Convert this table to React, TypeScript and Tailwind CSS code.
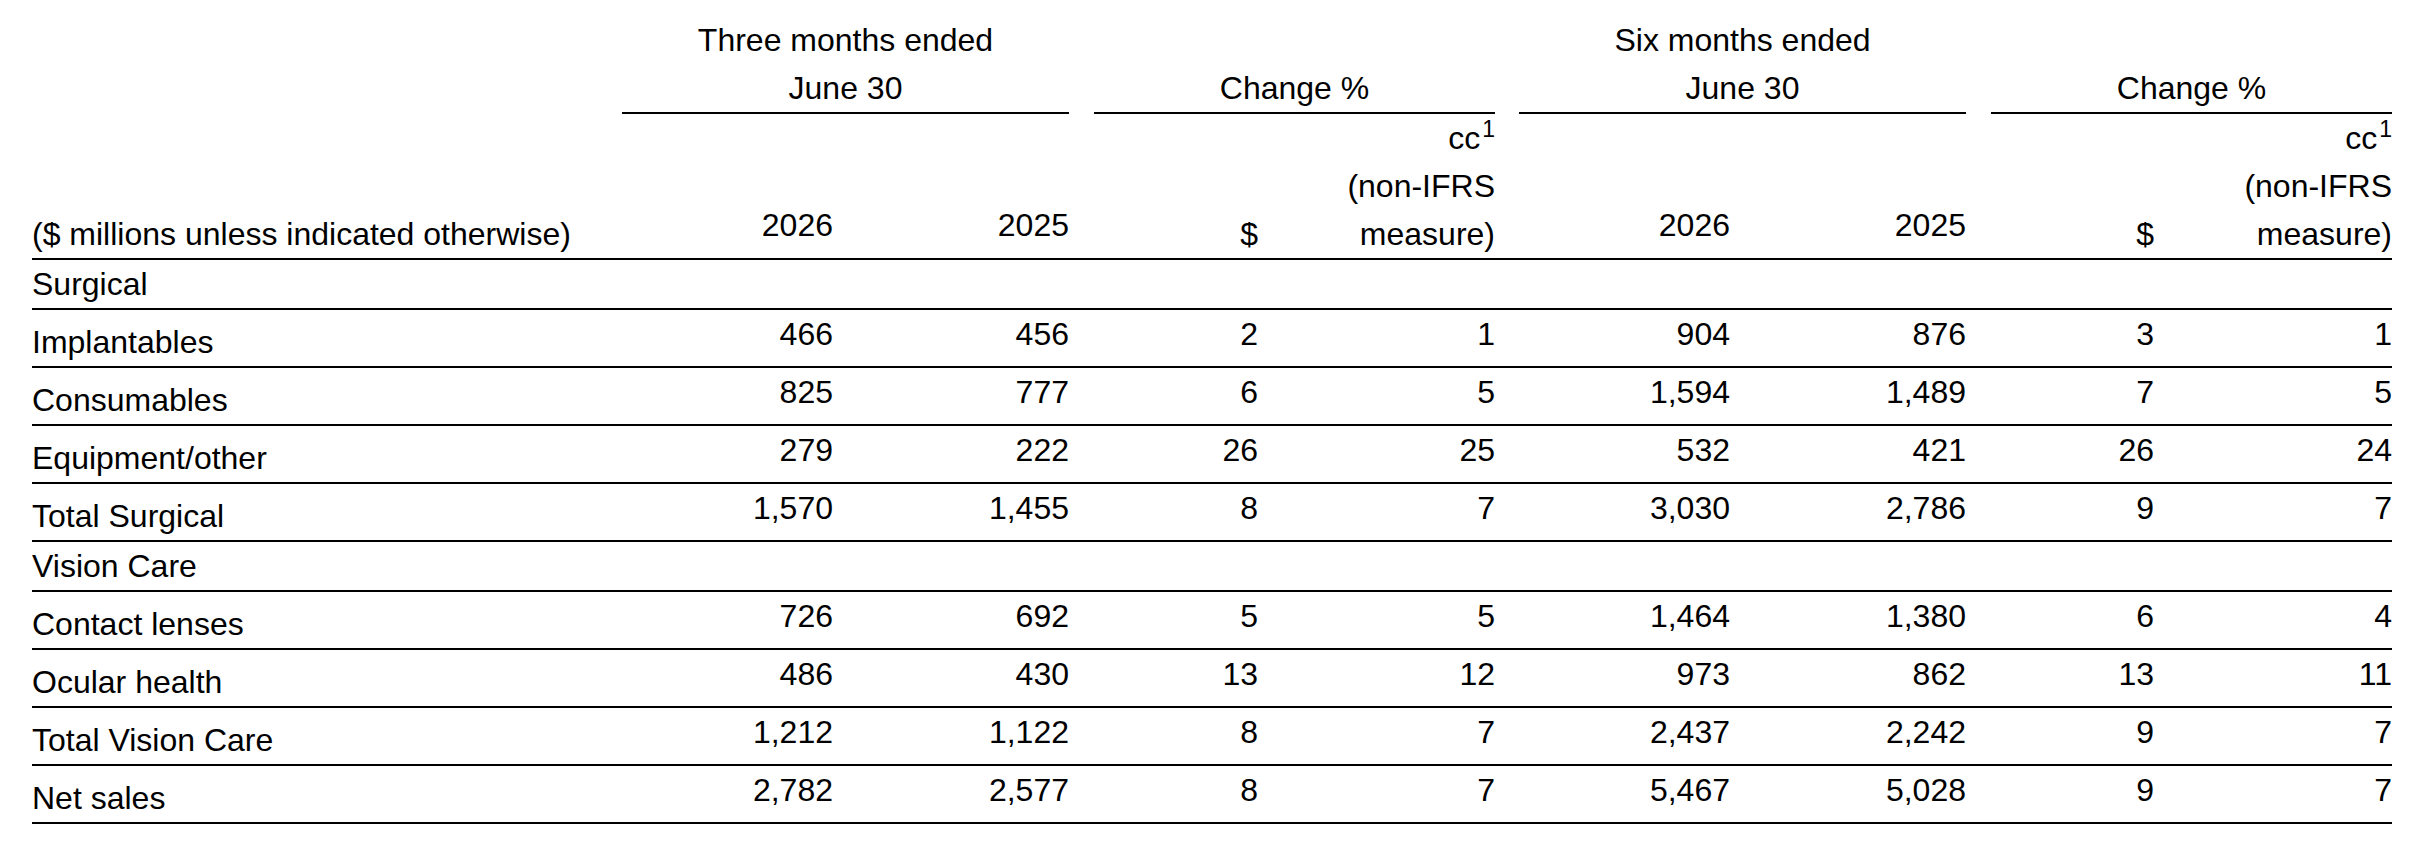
const cols =
  'grid grid-cols-[590px_211px_236px_189px_237px_235px_236px_188px_238px]'

type Row = { label: string; values?: string[] }

const rows: Row[] = [
  { label: 'Surgical' },
  { label: 'Implantables', values: ['466', '456', '2', '1', '904', '876', '3', '1'] },
  { label: 'Consumables', values: ['825', '777', '6', '5', '1,594', '1,489', '7', '5'] },
  { label: 'Equipment/other', values: ['279', '222', '26', '25', '532', '421', '26', '24'] },
  { label: 'Total Surgical', values: ['1,570', '1,455', '8', '7', '3,030', '2,786', '9', '7'] },
  { label: 'Vision Care' },
  { label: 'Contact lenses', values: ['726', '692', '5', '5', '1,464', '1,380', '6', '4'] },
  { label: 'Ocular health', values: ['486', '430', '13', '12', '973', '862', '13', '11'] },
  { label: 'Total Vision Care', values: ['1,212', '1,122', '8', '7', '2,437', '2,242', '9', '7'] },
  { label: 'Net sales', values: ['2,782', '2,577', '8', '7', '5,467', '5,028', '9', '7'] },
]

function CcHeader() {
  return (
    <div className="text-right">
      <div>
        cc<span className="ml-[2px] align-[12px] text-[23px] leading-none">1</span>
      </div>
      <div>(non-IFRS</div>
      <div>measure)</div>
    </div>
  )
}

export default function App() {
  return (
    <div className="min-h-screen bg-white pt-[16px] pl-[32px] font-['Liberation_Sans',Arial,sans-serif] text-[32px] leading-[48px] text-black">
      <div className="w-[2360px]">
        {/* Group headings */}
        <div className={`${cols} items-end`}>
          <div />
          <div className="col-span-2 border-b-2 border-black text-center">
            <div>Three months ended</div>
            <div>June 30</div>
          </div>
          <div className="col-span-2 ml-[25px] border-b-2 border-black text-center">Change %</div>
          <div className="col-span-2 ml-[24px] border-b-2 border-black text-center">
            <div>Six months ended</div>
            <div>June 30</div>
          </div>
          <div className="col-span-2 ml-[25px] border-b-2 border-black text-center">Change %</div>
        </div>

        {/* Column headings */}
        <div className={`${cols} items-end border-b-2 border-black`}>
          <div>($ millions unless indicated otherwise)</div>
          <div className="pb-[9px] text-right">2026</div>
          <div className="pb-[9px] text-right">2025</div>
          <div className="text-right">$</div>
          <CcHeader />
          <div className="pb-[9px] text-right">2026</div>
          <div className="pb-[9px] text-right">2025</div>
          <div className="text-right">$</div>
          <CcHeader />
        </div>

        {/* Body */}
        {rows.map(row =>
          row.values ? (
            <div key={row.label} className={`${cols} h-[58px] items-end border-b-2 border-black`}>
              <div>{row.label}</div>
              {row.values.map((v, i) => (
                <div key={i} className="pb-[8px] text-right">
                  {v}
                </div>
              ))}
            </div>
          ) : (
            <div key={row.label} className="h-[50px] border-b-2 border-black">
              {row.label}
            </div>
          )
        )}
      </div>
    </div>
  )
}
